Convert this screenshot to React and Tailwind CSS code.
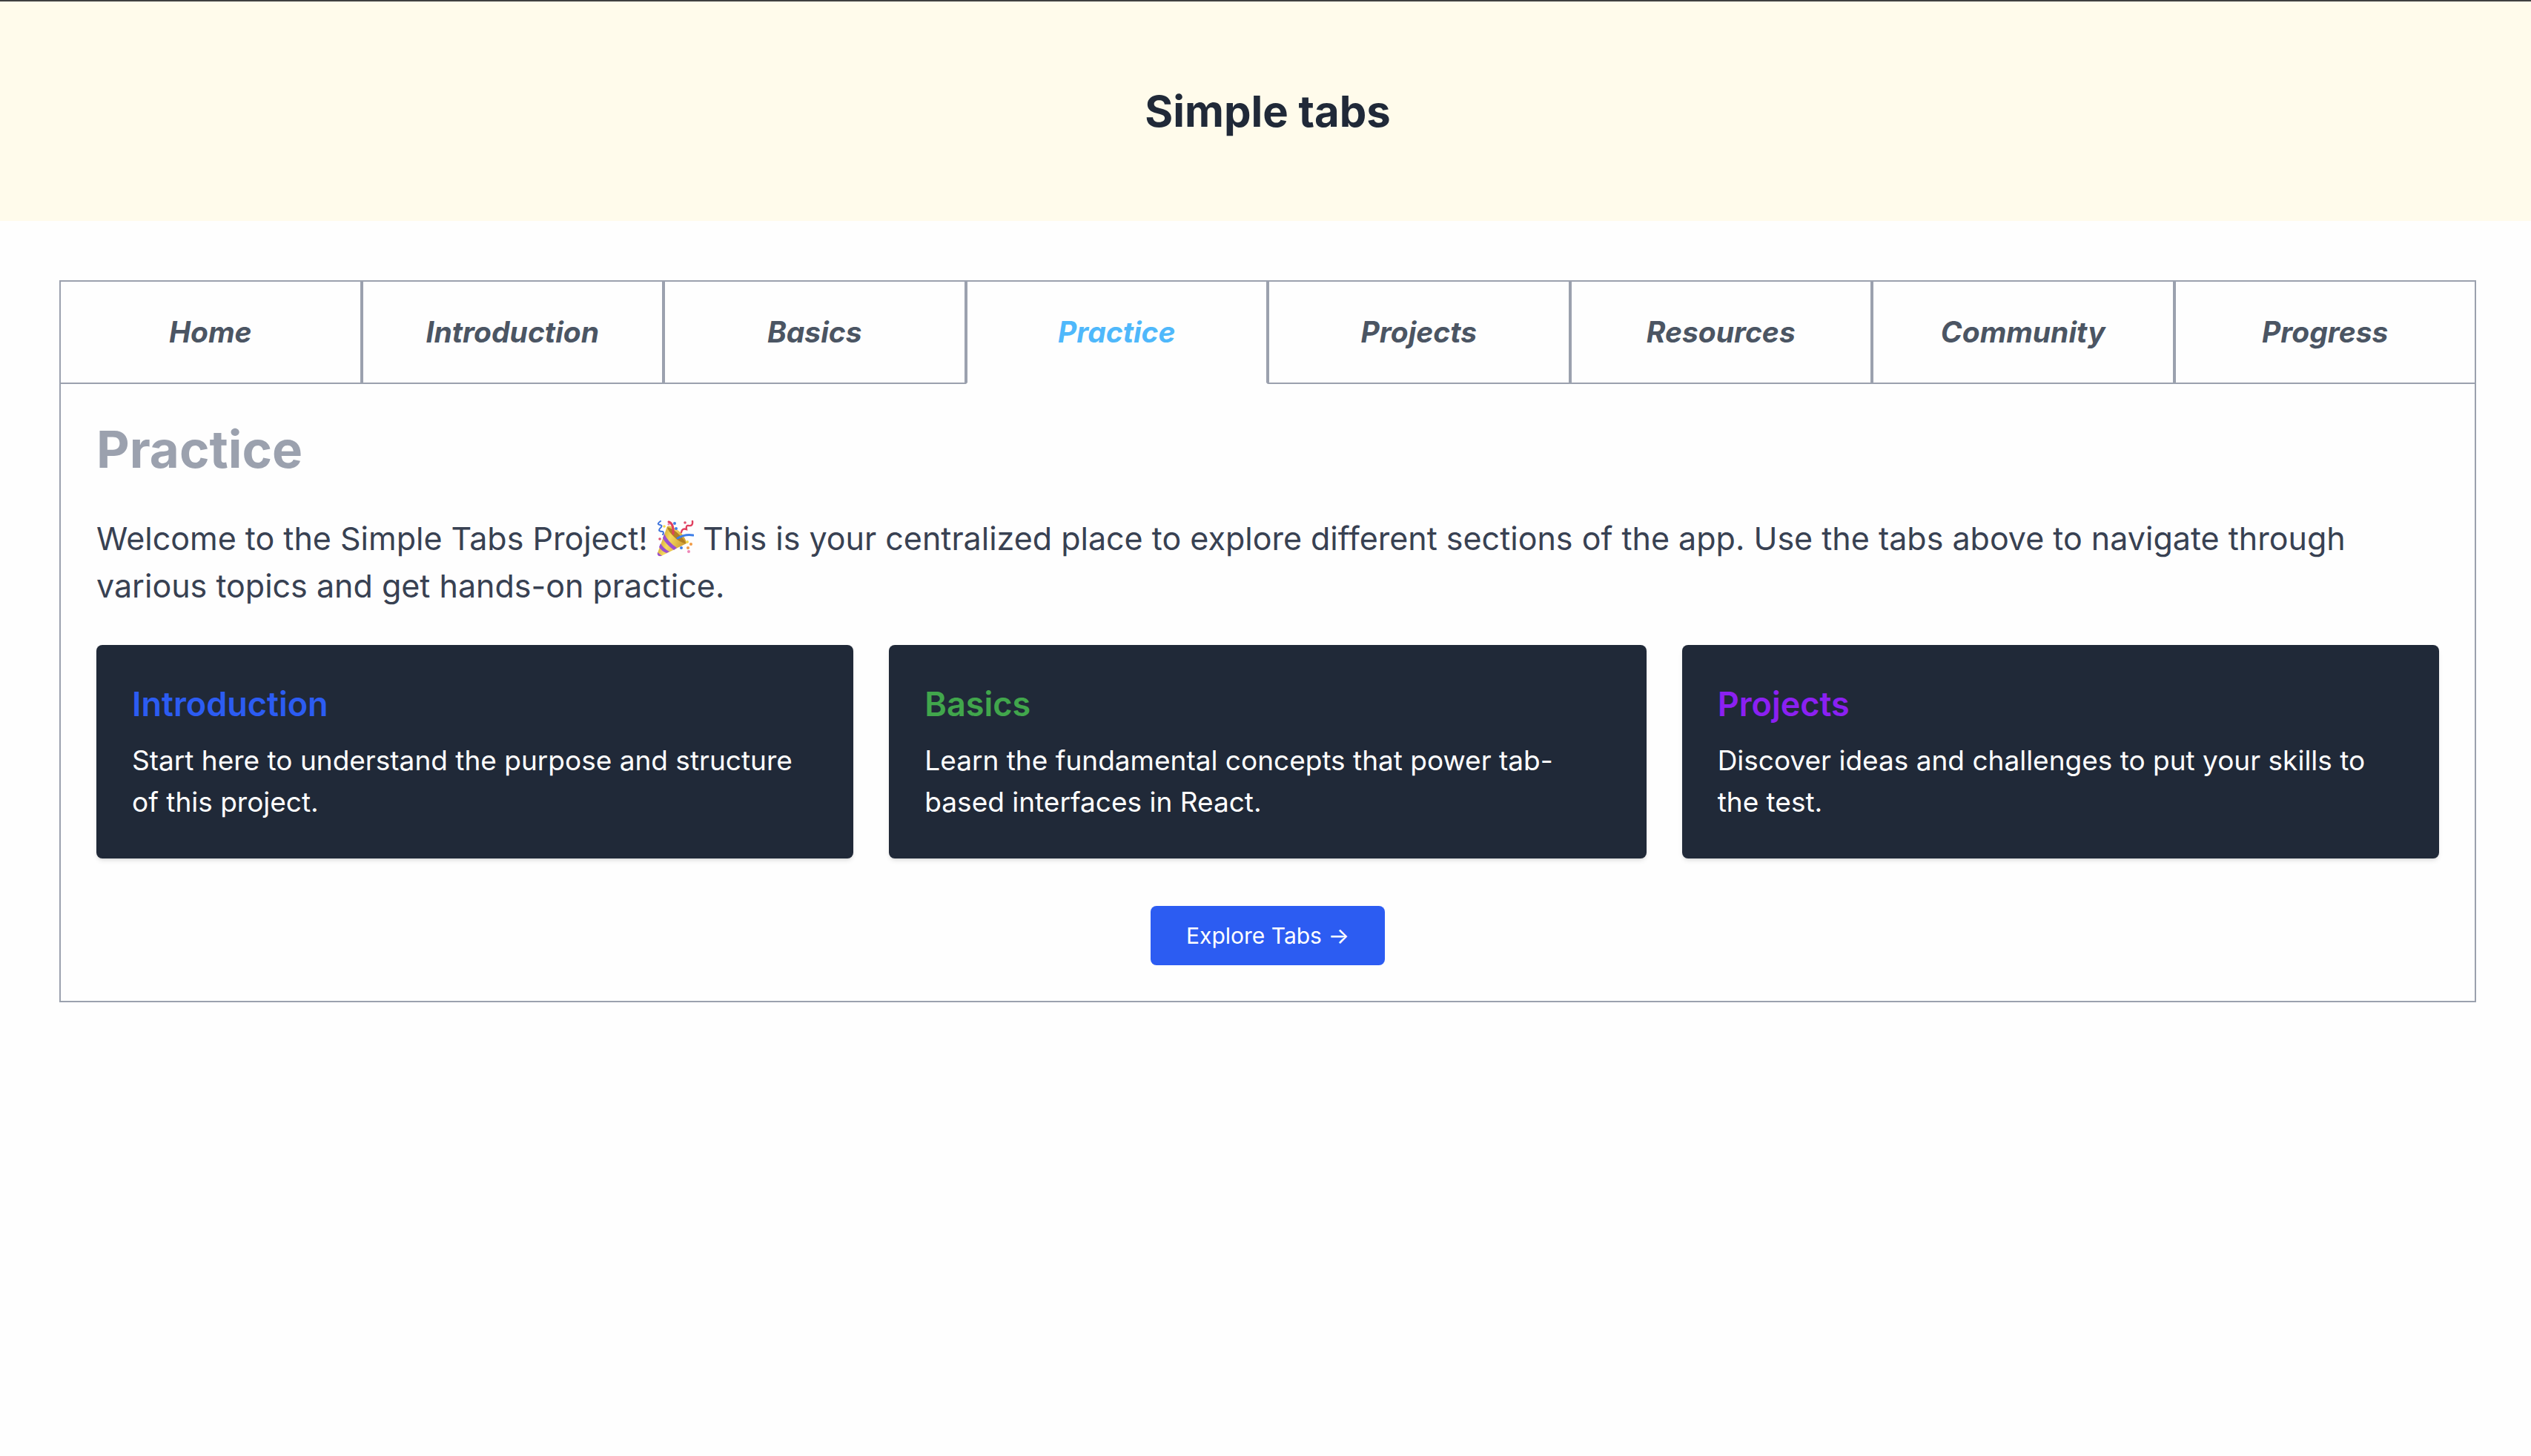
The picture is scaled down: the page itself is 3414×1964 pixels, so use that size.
import { useState } from "react";

const tabs = ["Home", "Introduction", "Basics", "Practice", "Projects", "Resources", "Community", "Progress"];

const cards = [
  { title: "Introduction", color: "text-[#2c5cf2]", text: "Start here to understand the purpose and structure of this project." },
  { title: "Basics", color: "text-[#41a64c]", text: "Learn the fundamental concepts that power tab-based interfaces in React." },
  { title: "Projects", color: "text-[#8b20f2]", text: "Discover ideas and challenges to put your skills to the test." },
];

function PartyPopper() {
  return (
    <svg viewBox="0 0 50 50" className="inline-block size-[50px] align-[-10px]" aria-hidden="true">
      <defs>
        <linearGradient id="cone" x1="0" y1="0.3" x2="1" y2="0.7">
          <stop offset="0" stopColor="#c9942a" />
          <stop offset="0.4" stopColor="#f5d95e" />
          <stop offset="1" stopColor="#c9922a" />
        </linearGradient>
      </defs>
      <path d="M14 8 L1 44 Q1 49 6 48 L40 31 Q38 20 28 13 Q19 6 14 8Z" fill="url(#cone)" />
      <path d="M14 9 Q24 12 31 20 Q38 27 39 31 Q31 30 23 22 Q15 14 14 9Z" fill="#b07f24" />
      <path d="M10 18 Q15 29 27 37 L23 40 Q12 32 8 24Z M5 31 Q9 38 17 42 L13 44 Q6 41 3 36Z M1 43 L7 48 L3 48 Q0 47 1 43Z" fill="#9a4fd0" />
      <g fill="none" strokeLinecap="round">
        <path d="M16 2 Q23 4 22 18" stroke="#e0405f" strokeWidth="3" />
        <path d="M28 24 Q38 18 49 20" stroke="#3f7fe8" strokeWidth="3" />
        <path d="M5 1 Q-1 5 4 6 Q9 7 4 11 Q1 15 8 15 Q10 17 8 19" stroke="#3f74dc" strokeWidth="2" />
        <path d="M48 1 Q49 8 43 7 Q39 6 40 12 Q34 10 33 16" stroke="#e0405f" strokeWidth="2.4" />
      </g>
      <g fill="#3f7fe8"><circle cx="24" cy="4" r="2" /><circle cx="26" cy="11" r="2" /><circle cx="33" cy="37" r="2" /></g>
      <g fill="#e0506f"><circle cx="38" cy="3" r="1.8" /><circle cx="4" cy="25" r="1.8" /></g>
      <g fill="#f5d84a"><circle cx="10" cy="8" r="1.8" /><circle cx="41" cy="29" r="2" /></g>
      <g fill="#f09a45"><circle cx="46" cy="32" r="2" /><circle cx="42" cy="37" r="2" /></g>
      <g fill="#ee86b6"><circle cx="16" cy="5" r="1.6" /><circle cx="43" cy="42" r="2" /></g>
    </svg>
  );
}

export default function App() {
  const [active, setActive] = useState("Practice");
  return (
    <div className="min-h-screen bg-[#fefefe] font-['Inter',sans-serif]">
      <header className="border-t-2 border-neutral-700 bg-amber-50 py-28 pl-1.5 text-center">
        <h1 className="text-[58px] leading-[72px] font-bold text-[#202938]">Simple tabs</h1>
      </header>
      <main className="mt-20 mr-[74px] ml-20">
        <div role="tablist" className="grid grid-cols-8">
          {tabs.map((tab) => (
            <button
              key={tab}
              id={"tab-" + tab}
              role="tab"
              aria-selected={tab === active}
              aria-controls="panel"
              onClick={() => setActive(tab)}
              className={
                "h-[140px] border-2 border-[#9ba1ae] text-[39px] leading-[56px] font-bold italic " +
                (tab === active ? "border-b-transparent text-[#4fb8fb]" : "text-[#4b5563]")
              }
            >
              {tab}
            </button>
          ))}
        </div>
        <section id="panel" role="tabpanel" aria-labelledby={"tab-" + active} className="border-2 border-t-0 border-[#9ba1ae] p-12">
          <h2 className="text-[69px] leading-[80px] font-bold text-[#9ba1ae]">{active}</h2>
          <p className="mt-12 text-[43px] leading-[64px] text-[#384152]">
            Welcome to the Simple Tabs Project! <PartyPopper /> This is your centralized place to explore different sections of the app. Use the tabs above to navigate through various topics and get hands-on practice.
          </p>
          <div className="mt-12 grid grid-cols-3 gap-12">
            {cards.map((card) => (
              <article key={card.title} className="rounded-lg bg-[#202938] p-12 shadow-md">
                <h3 className={"text-[45px] leading-[64px] font-semibold " + card.color}>{card.title}</h3>
                <p className="mt-4 text-[37px] leading-[56px] text-white">{card.text}</p>
              </article>
            ))}
          </div>
          <div className="mt-16 flex justify-center">
            <button className="rounded-lg bg-[#2c5cf2] px-12 py-4 text-[30px] leading-[48px] text-white">Explore Tabs →</button>
          </div>
        </section>
      </main>
    </div>
  );
}
